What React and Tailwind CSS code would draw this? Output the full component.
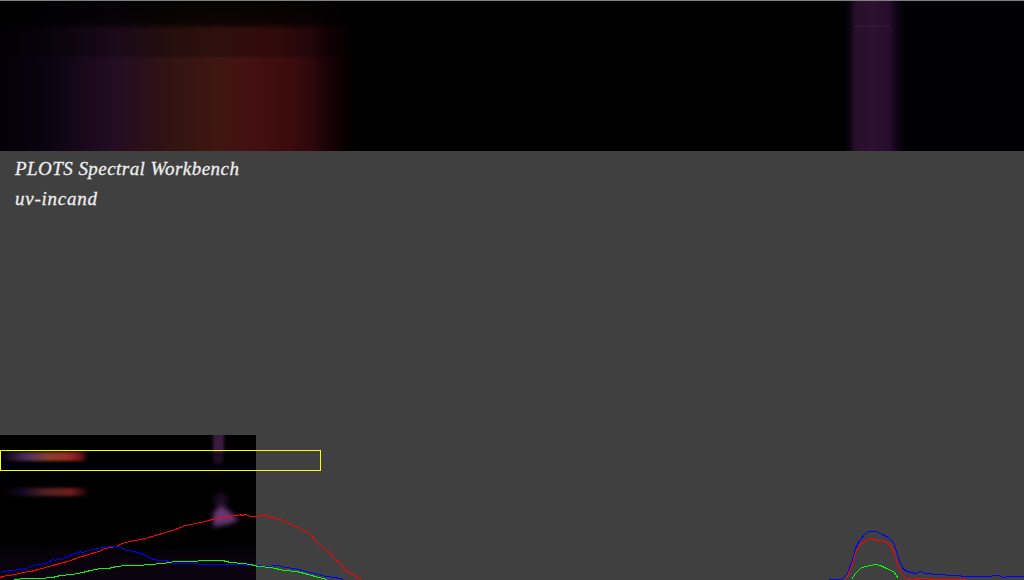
const curves = [
  { color: '#ff0000', points: '0,578 1,576 15,574 22,572 30,571 38,569 45,567 52,565 60,563 70,560 78,557 88,554 98,551 105,548 115,546 122,543 129,541 135,540 145,538 155,535 165,532 172,530 180,527 185,525 195,523 205,521 215,518 225,516 238,515 239,514 241,515 245,514 250,516 257,516 258,515 265,515 267,516 275,518 284,520 290,524 297,527 304,530 310,534 316,541 322,547 328,551 334,558 340,563 345,570 352,574 361,579' },
  { color: '#ff0000', points: '846,579 851,566 855,552 860,544 867,539 870,538 878,540 885,541 890,545 894,553 897,564 901,573 906,578 914,579 918,578 928,578 932,579 966,579' },
  { color: '#0000ff', points: '0,573 2,571 12,570 26,568 36,564 47,563 52,559 55,560 58,558 60,559 67,556 78,552 80,551 82,552 88,550 98,548 108,546 118,546 123,548 126,550 130,550 140,553 144,554 150,558 158,560 166,560 172,563 190,563 205,564 235,564 250,565 258,565 265,566 278,565 284,567 295,568 305,571 315,573 325,576 335,577 343,579' },
  { color: '#0000ff', points: '828,579 841,579 847,573 851,562 855,548 859,540 865,533 868,531 875,531 882,534 888,537 893,542 896,551 899,560 903,569 907,571 915,573 920,571 925,573 940,574 950,575 970,576 985,576 999,575 1002,577 1010,576 1024,576' },
  { color: '#00ff00', points: '14,579 25,578 40,578 52,577 60,575 72,574 82,572 90,570 100,568 108,568 116,566 125,565 137,565 150,564 162,563 175,561 190,561 205,560 222,560 230,562 242,563 250,564 258,566 270,567 284,570 296,571 308,574 318,577 327,579' },
  { color: '#00ff00', points: '851,579 855,573 861,567 870,565 875,564 880,565 886,568 893,571 898,578' },
];

function SpectrumBand() {
  return (
    <svg className="block h-[151px] w-full shrink-0" viewBox="0 0 1024 151" preserveAspectRatio="none">
      <defs>
        <linearGradient id="incandescent" gradientUnits="userSpaceOnUse" x1="0" x2="360" y1="0" y2="0">
          <stop offset="0" stopColor="#030006" />
          <stop offset=".12" stopColor="#08030e" />
          <stop offset=".22" stopColor="#160819" />
          <stop offset=".32" stopColor="#230d23" />
          <stop offset=".4" stopColor="#2b101a" />
          <stop offset=".5" stopColor="#351410" />
          <stop offset=".6" stopColor="#3f1611" />
          <stop offset=".7" stopColor="#441011" />
          <stop offset=".8" stopColor="#3e0b0d" />
          <stop offset=".86" stopColor="#2f080c" />
          <stop offset=".91" stopColor="#1a0206" />
          <stop offset=".96" stopColor="#070001" />
          <stop offset="1" stopColor="#000000" />
        </linearGradient>
        <linearGradient id="dim" x1="0" x2="0" y1="0" y2="1">
          <stop offset="0" stopColor="#000" stopOpacity=".93" />
          <stop offset=".15" stopColor="#000" stopOpacity=".8" />
          <stop offset=".167" stopColor="#000" stopOpacity=".65" />
          <stop offset=".195" stopColor="#000" stopOpacity=".28" />
          <stop offset=".368" stopColor="#000" stopOpacity=".28" />
          <stop offset=".388" stopColor="#000" stopOpacity="0" />
        </linearGradient>
        <linearGradient id="uv" gradientUnits="userSpaceOnUse" x1="844" x2="904" y1="0" y2="0">
          <stop offset="0" stopColor="#000" />
          <stop offset=".1" stopColor="#0d0411" />
          <stop offset=".2" stopColor="#28102c" />
          <stop offset=".5" stopColor="#2d1130" />
          <stop offset=".76" stopColor="#270d2b" />
          <stop offset=".86" stopColor="#13051a" />
          <stop offset="1" stopColor="#010104" />
        </linearGradient>
      </defs>
      <rect width="1024" height="151" fill="#000" />
      <rect width="360" height="151" fill="url(#incandescent)" />
      <rect width="362" height="151" fill="url(#dim)" />
      <rect x="844" width="60" height="151" fill="url(#uv)" />
      <rect x="904" width="120" height="151" fill="#010104" />
      <rect x="854" y="25" width="36" height="2" fill="#541a56" opacity=".25" />
      <rect width="1024" height="1" fill="#808080" />
    </svg>
  );
}

function CameraFrame() {
  return (
    <svg className="block h-[145px] w-64" viewBox="0 0 256 145">
      <defs>
        <linearGradient id="streak" x1="0" x2="1" y1="0" y2="0">
          <stop offset="0" stopColor="#08020d" />
          <stop offset=".3" stopColor="#50305f" />
          <stop offset=".53" stopColor="#85402f" />
          <stop offset=".76" stopColor="#9c2e28" />
          <stop offset=".9" stopColor="#751818" />
          <stop offset="1" stopColor="#100000" />
        </linearGradient>
        <linearGradient id="faint" x1="0" x2="1" y1="0" y2="0">
          <stop offset="0" stopColor="#000" />
          <stop offset=".25" stopColor="#150922" />
          <stop offset=".5" stopColor="#512022" />
          <stop offset=".8" stopColor="#721c1c" />
          <stop offset="1" stopColor="#100000" />
        </linearGradient>
        <linearGradient id="floor" x1="0" x2="0" y1="0" y2="1">
          <stop offset="0" stopColor="#000" />
          <stop offset=".3" stopColor="#07020a" />
          <stop offset="1" stopColor="#0c0310" />
        </linearGradient>
        <filter id="soft" colorInterpolationFilters="sRGB" x="-50%" y="-50%" width="200%" height="200%"><feGaussianBlur stdDeviation="1.4" /></filter>
        <filter id="glow" colorInterpolationFilters="sRGB" x="-60%" y="-60%" width="220%" height="220%"><feGaussianBlur stdDeviation="2.6" /></filter>
      </defs>
      <rect width="256" height="145" fill="#000" />
      <path d="M0 105L120 118L256 107V145H0Z" fill="url(#floor)" />
      <rect x="2" y="17" width="86" height="9" rx="3" fill="url(#streak)" filter="url(#soft)" />
      <rect x="2" y="53" width="86" height="8" rx="3" fill="url(#faint)" filter="url(#soft)" />
      <rect x="213" y="-4" width="11" height="23" rx="3" fill="#391b40" filter="url(#soft)" />
      <rect x="213" y="18" width="10" height="11" rx="3" fill="#1c0c22" filter="url(#soft)" />
      <ellipse cx="221" cy="66" rx="7" ry="8" fill="#1c0c24" filter="url(#glow)" />
      <path d="M213 78L221 70L229 76L239 85L229 89L213 92Z" fill="#653772" filter="url(#glow)" />
    </svg>
  );
}

export default function App() {
  return (
    <main className="relative flex h-[580px] w-[1024px] flex-col overflow-hidden bg-[#404040]">
      <SpectrumBand />
      <header className="flex flex-1 flex-col pl-[15px] pt-[3px] font-[Georgia,'Liberation_Serif',serif] text-[19px] italic leading-[30px] text-[#eeeeee] [-webkit-text-stroke:0.3px_#eeeeee]">
        <h1 className="whitespace-nowrap tracking-[0.45px]">PLOTS Spectral Workbench</h1>
        <p className="tracking-[0.75px]">uv-incand</p>
      </header>
      <CameraFrame />
      <div className="absolute left-0 top-[450px] h-[21px] w-[321px] border border-[#ffff00]" />
      <svg className="absolute inset-0 h-full w-full" viewBox="0 0 1024 580" shapeRendering="crispEdges">
        {curves.map((curve, index) => (
          <polyline key={index} points={curve.points} transform="translate(.5 .5)" fill="none" stroke={curve.color} strokeWidth="1" />
        ))}
      </svg>
    </main>
  );
}
